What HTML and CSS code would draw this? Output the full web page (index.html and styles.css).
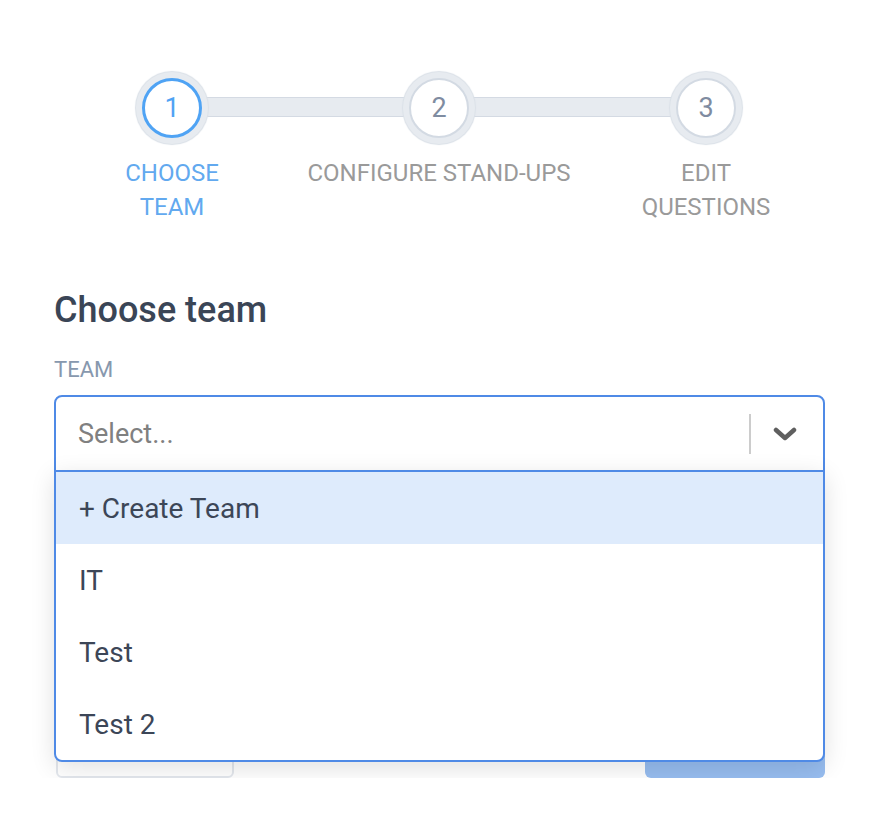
FILE: index.html
```html
<!DOCTYPE html>
<html lang="en">
<head>
    <meta charset="UTF-8">
    <meta name="viewport" content="width=device-width, initial-scale=1.0">
    <title>New Stand-up</title>
    <link rel="stylesheet" href="styles.css">
</head>
<body>

<div class="container">
    <!-- Wizard steps -->
    <div class="stepper">
        <div class="step active">
            <div class="halo"><span class="circle">1</span></div>
            <div class="step-label">Choose team</div>
        </div>
        <div class="step">
            <div class="halo"><span class="circle">2</span></div>
            <div class="step-label">Configure stand-ups</div>
        </div>
        <div class="step">
            <div class="halo"><span class="circle">3</span></div>
            <div class="step-label">Edit questions</div>
        </div>
    </div>

    <h2 class="title">Choose team</h2>

    <div class="field">
        <label class="field-label">Team</label>
        <div class="select">
            <div class="select-control">
                <span class="placeholder">Select...</span>
                <span class="separator"></span>
                <svg class="chevron" width="24" height="14" viewBox="0 0 24 14">
                    <path d="M3 3 L12 11 L21 3" fill="none" stroke="#5f5f5f" stroke-width="4.5" stroke-linecap="round" stroke-linejoin="round"/>
                </svg>
            </div>
            <div class="select-menu">
                <div class="option focused">+ Create Team</div>
                <div class="option">IT</div>
                <div class="option">Test</div>
                <div class="option">Test 2</div>
            </div>
        </div>
    </div>

    <!-- Back / Next sit under the open menu -->
    <div class="actions">
        <button class="btn-back" aria-label="Back"></button>
        <button class="btn-next" aria-label="Next"></button>
    </div>
</div>

</body>
</html>
```

FILE: styles.css
```css
body {
    font-family: Roboto, "Noto Sans", sans-serif;
    margin: 0;
    padding: 0;
    background-color: #ffffff;
    color: #3c4657;
}
.container {
    width: 771px;
    padding: 72px 0 0 54px;
}

/* steps */
.stepper {
    position: relative;
    display: grid;
    grid-template-columns: 134px 1fr 134px;
    margin: 0 52px 0 51px;
}
.stepper::before {
    content: "";
    position: absolute;
    top: 25px;
    left: 67px;
    right: 68px;
    height: 18px;
    background-color: #e7ebf0;
    border-top: 1px solid #d4dae3;
    border-bottom: 1px solid #d4dae3;
}
.step {
    position: relative;
    display: flex;
    flex-direction: column;
    align-items: center;
}
.halo {
    width: 72px;
    height: 72px;
    border-radius: 50%;
    background-color: #e7ebf0;
    box-shadow: 0 0 1px 1px #dbe1e8;
    display: flex;
    align-items: center;
    justify-content: center;
}
.circle {
    box-sizing: border-box;
    width: 60px;
    height: 60px;
    border-radius: 50%;
    background-color: white;
    border: 2px solid #d3dae3;
    color: #7f8ca1;
    font-size: 27px;
    display: flex;
    align-items: center;
    justify-content: center;
}
.step-label {
    margin-top: 12px;
    font-size: 24px;
    line-height: 34px;
    text-transform: uppercase;
    text-align: center;
    color: #9a9a9a;
}
.step.active .circle {
    border: 3px solid #4fa3f4;
    color: #4fa3f4;
}
.step.active .step-label {
    color: #62a9ef;
}

/* form */
.title {
    margin: 65px 0 0 0;
    font-size: 36px;
    font-weight: 500;
    line-height: 42px;
    color: #3a4556;
}
.field {
    margin-top: 26px;
}
.field-label {
    display: block;
    font-size: 22px;
    line-height: 26px;
    text-transform: uppercase;
    color: #8798ae;
    margin-bottom: 12px;
}
.select {
    position: relative;
}
.select-control {
    box-sizing: border-box;
    height: 77px;
    border: 2px solid #4f8ae6;
    border-radius: 8px 8px 0 0;
    display: flex;
    align-items: center;
    padding: 0 26px 0 22px;
    background-color: white;
}
.placeholder {
    flex: 1;
    font-size: 27px;
    color: #808080;
}
.separator {
    width: 2px;
    height: 40px;
    background-color: #cccccc;
    margin-right: 22px;
}
.select-menu {
    position: absolute;
    top: 75px;
    left: 0;
    right: 0;
    border: 2px solid #4f8ae6;
    border-radius: 0 0 8px 8px;
    background-color: white;
    box-shadow: 0 6px 24px rgba(0, 0, 0, 0.12);
    overflow: hidden;
    z-index: 5;
}
.option {
    height: 72px;
    display: flex;
    align-items: center;
    padding-left: 23px;
    font-size: 28px;
    color: #3c4657;
}
.option.focused {
    background-color: #deebfc;
}

/* buttons under the menu */
.actions {
    display: flex;
    justify-content: space-between;
    margin-top: 246px;
}
button {
    height: 60px;
    width: 180px;
    border-radius: 6px;
}
.btn-back {
    margin-left: 2px;
    width: 178px;
    background-color: white;
    border: 2px solid #e3e7ed;
}
.btn-next {
    border: none;
    background-color: #97bdf0;
}
```
